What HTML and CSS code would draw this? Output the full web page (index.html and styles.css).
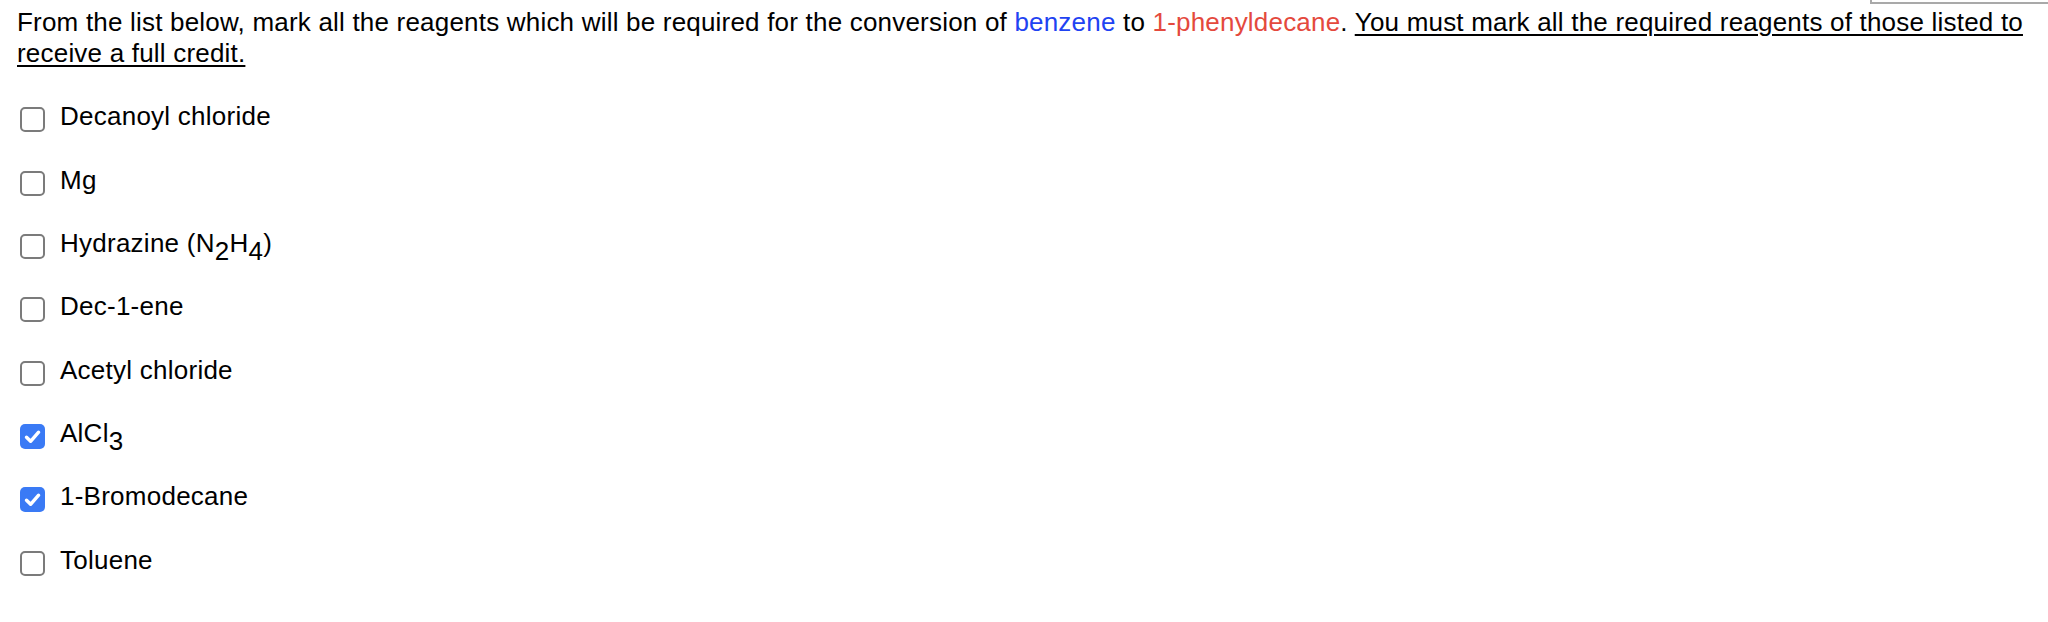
FILE: index.html
```html
<!DOCTYPE html>
<html>
<head>
<meta charset="utf-8">
<link rel="stylesheet" href="styles.css">
</head>
<body>
<div class="corner-box"></div>
<p class="question">From the list below, mark all the reagents which will be required for the conversion of <span class="blue">benzene</span> to <span class="red">1-phenyldecane</span>. <u>You must mark all the required reagents of those listed to<br>receive a full credit.</u></p>
<ul class="options">
  <li class="option"><span class="box"></span><span class="label">Decanoyl chloride</span></li>
  <li class="option"><span class="box"></span><span class="label">Mg</span></li>
  <li class="option"><span class="box"></span><span class="label">Hydrazine (N<sub>2</sub>H<sub>4</sub>)</span></li>
  <li class="option"><span class="box"></span><span class="label">Dec-1-ene</span></li>
  <li class="option"><span class="box"></span><span class="label">Acetyl chloride</span></li>
  <li class="option"><span class="box checked"><svg viewBox="0 0 25 25" width="25" height="25"><path d="M6.5 13.2 L10.6 17.3 L18.6 8.2" fill="none" stroke="#fff" stroke-width="3.4" stroke-linecap="round" stroke-linejoin="round"/></svg></span><span class="label">AlCl<sub>3</sub></span></li>
  <li class="option"><span class="box checked"><svg viewBox="0 0 25 25" width="25" height="25"><path d="M6.5 13.2 L10.6 17.3 L18.6 8.2" fill="none" stroke="#fff" stroke-width="3.4" stroke-linecap="round" stroke-linejoin="round"/></svg></span><span class="label">1-Bromodecane</span></li>
  <li class="option"><span class="box"></span><span class="label">Toluene</span></li>
</ul>
</body>
</html>
```
FILE: styles.css
```css
html, body {
  background: #ffffff;
}
body {
  margin: 7px 0 0 17px;
  font-family: "Liberation Sans", Arial, Helvetica, sans-serif;
  font-size: 26px;
  letter-spacing: 0.2px;
  color: #000;
  overflow: hidden;
}
.corner-box {
  position: absolute;
  top: -40px;
  left: 1870px;
  width: 200px;
  height: 40px;
  border: 2px solid #a9a9a9;
}
.question {
  margin: 0;
  line-height: 31px;
  white-space: nowrap;
}
.question u {
  text-decoration-thickness: 2px;
  text-underline-offset: 3px;
}
.blue {
  color: #1f43f2;
}
.red {
  color: #e4493d;
}
.options {
  list-style: none;
  margin: 16px 0 0 0;
  padding: 0;
}
.option {
  display: flex;
  align-items: center;
  height: 63.36px;
  gap: 15px;
}
.box {
  flex: none;
  width: 25px;
  height: 25px;
  margin-left: 3px;
  box-sizing: border-box;
  border: 2px solid #7b7b7b;
  border-radius: 5px;
  background: #fff;
  position: relative;
  top: 3px;
}
.box.checked {
  border: none;
  background: #3a7af5;
}
.box svg {
  display: block;
}
.label {
  line-height: 29px;
  letter-spacing: 0.25px;
}
.label sub {
  font-size: 1em;
  vertical-align: -0.3em;
  line-height: 0;
}
```
